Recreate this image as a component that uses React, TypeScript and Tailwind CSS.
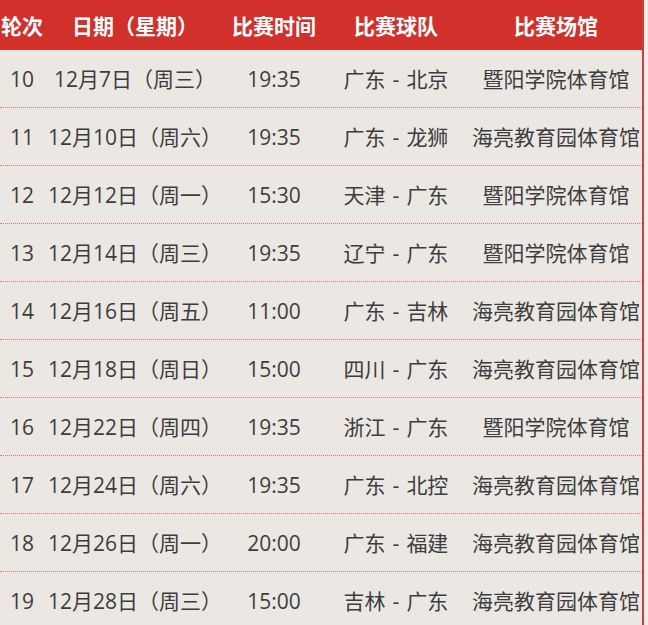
import React from "react";

const rows = [
  ["10", "12月7日（周三）", "19:35", "广东 - 北京", "暨阳学院体育馆"],
  ["11", "12月10日（周六）", "19:35", "广东 - 龙狮", "海亮教育园体育馆"],
  ["12", "12月12日（周一）", "15:30", "天津 - 广东", "暨阳学院体育馆"],
  ["13", "12月14日（周三）", "19:35", "辽宁 - 广东", "暨阳学院体育馆"],
  ["14", "12月16日（周五）", "11:00", "广东 - 吉林", "海亮教育园体育馆"],
  ["15", "12月18日（周日）", "15:00", "四川 - 广东", "海亮教育园体育馆"],
  ["16", "12月22日（周四）", "19:35", "浙江 - 广东", "暨阳学院体育馆"],
  ["17", "12月24日（周六）", "19:35", "广东 - 北控", "海亮教育园体育馆"],
  ["18", "12月26日（周一）", "20:00", "广东 - 福建", "海亮教育园体育馆"],
  ["19", "12月28日（周三）", "15:00", "吉林 - 广东", "海亮教育园体育馆"],
];

const cols = "grid grid-cols-[44px_182px_96px_148px_172px]";

function Team({ s }: { s: string }) {
  const [a, b] = s.split(" - ");
  return (
    <span>
      {a}
      <span className="mx-[7px]">-</span>
      {b}
    </span>
  );
}

export default function App() {
  return (
    <div
      className="w-[648px] h-[625px] overflow-hidden bg-[#ebe8e4] flex"
      style={{ fontFamily: '"Open Sans", "Noto Sans CJK SC", "Noto Sans", sans-serif' }}
    >
      <div className="w-[642px] flex flex-col">
        <div className={`${cols} h-[50px] shrink-0 bg-[#d2302b] text-white font-bold text-[21px] items-center leading-none pt-[2px]`}>
          <div className="text-center whitespace-nowrap">轮次</div>
          <div className="text-center whitespace-nowrap">日期（星期）</div>
          <div className="text-center whitespace-nowrap">比赛时间</div>
          <div className="text-center whitespace-nowrap">比赛球队</div>
          <div className="text-center whitespace-nowrap">比赛场馆</div>
        </div>
        {rows.map((r) => (
          <div
            key={r[0]}
            className={`${cols} h-[58px] shrink-0 items-center border-b border-dotted border-[#d87c7c] text-[21px] leading-none text-[#3d3d3d] pt-[2px]`}
          >
            {r.map((c, i) => (
              <div key={i} className="text-center whitespace-nowrap">
                {i === 3 ? <Team s={c} /> : c}
              </div>
            ))}
          </div>
        ))}
      </div>
      <div className="w-[2px] bg-[#cf3e3a]" />
      <div className="flex-1 bg-[#efedea]" />
    </div>
  );
}
